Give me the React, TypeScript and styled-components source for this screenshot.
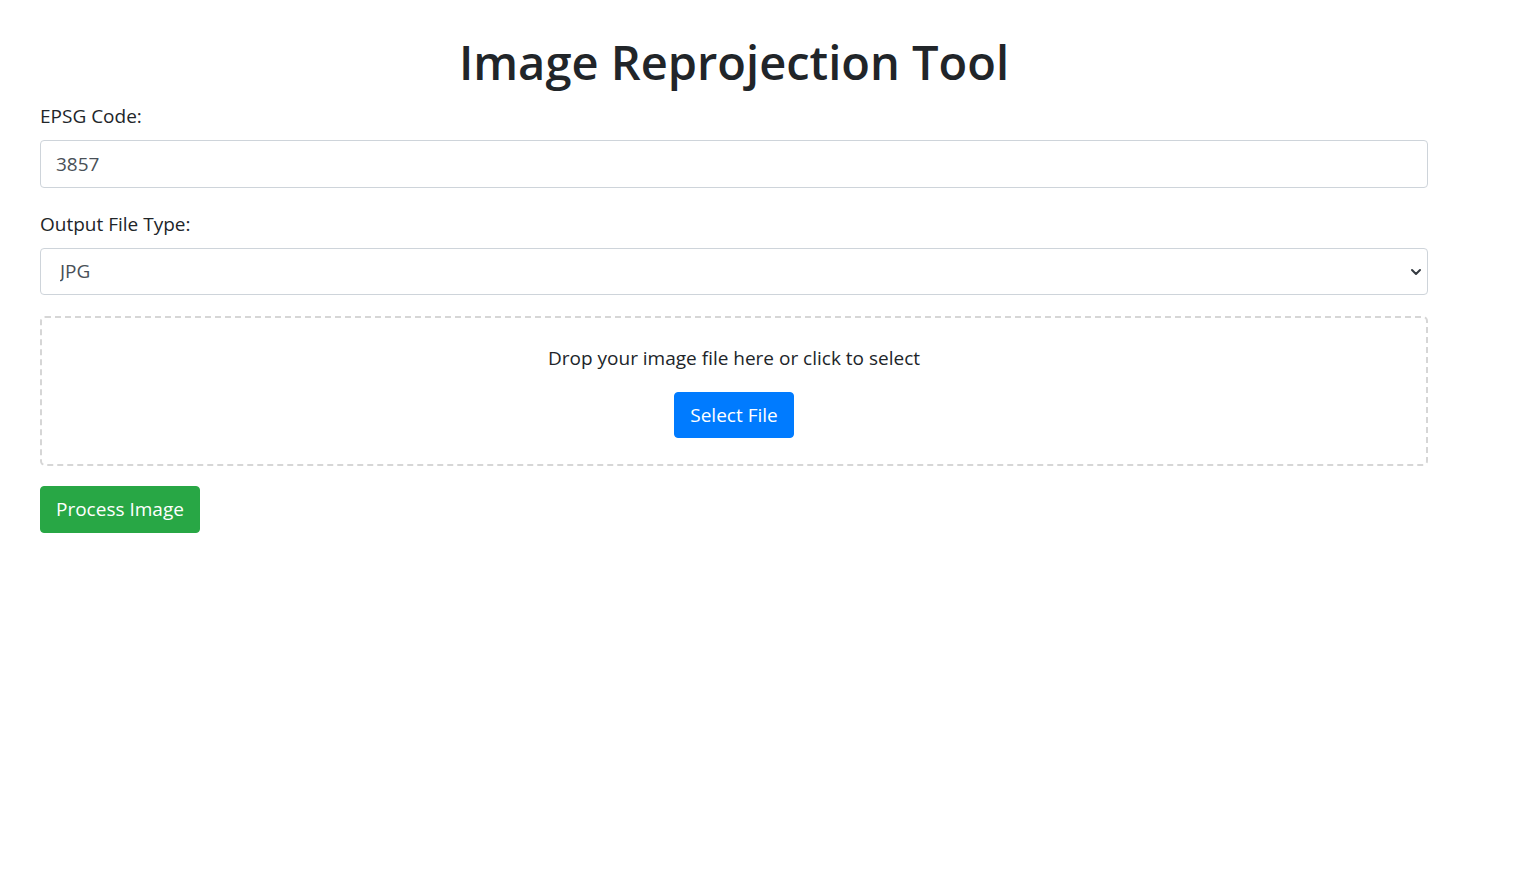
import React from "react";
import styled, { createGlobalStyle } from "styled-components";

const Global = createGlobalStyle`
  html, body { margin: 0; padding: 0; background: #fff; }
  body {
    font-family: "Open Sans", "Noto Sans", sans-serif;
    color: #212529;
    font-size: 19px;
    line-height: 1.5;
  }
  * { box-sizing: border-box; }
`;

const Page = styled.div`
  padding: 0 88px 40px 40px;
`;

const Title = styled.h1`
  margin: 30px 0 7px;
  font-size: 47px;
  line-height: 65px;
  font-weight: 600;
  text-align: center;
  color: #212529;
`;

const Field = styled.div<{ $gap: number }>`
  display: flex;
  flex-direction: column;
  margin-bottom: ${(p) => p.$gap}px;
`;

const Label = styled.label`
  font-size: 19px;
  line-height: 28px;
  margin-bottom: 10px;
`;

const Input = styled.input`
  height: 48px;
  padding: 0 15px;
  font: inherit;
  font-size: 19px;
  color: #495057;
  border: 1px solid #ced4da;
  border-radius: 4px;
  background: #fff;
  outline: none;
`;

const SelectWrap = styled.div`
  position: relative;
  display: flex;
`;

const Select = styled.select`
  flex: 1;
  height: 47px;
  padding: 0 15px 0 19px;
  font: inherit;
  font-size: 19px;
  color: #495057;
  border: 1px solid #ced4da;
  border-radius: 4px;
  background: #fff;
  appearance: none;
  outline: none;
`;

const Chevron = styled.svg`
  position: absolute;
  right: 4px;
  top: 50%;
  transform: translateY(-50%);
  pointer-events: none;
`;

const DropZone = styled.div`
  border: 2px dashed #d6d6d6;
  border-radius: 5px;
  padding: 26px 20px 26px;
  display: flex;
  flex-direction: column;
  align-items: center;
  margin-bottom: 20px;
`;

const DropText = styled.p`
  margin: 0 0 20px;
  font-size: 19px;
  line-height: 28px;
  color: #212529;
`;

const Button = styled.button<{ $variant: "primary" | "success" }>`
  height: ${(p) => (p.$variant === "primary" ? 46 : 47)}px;
  padding: 0 15px;
  font: inherit;
  font-size: 19px;
  color: #fff;
  border: 1px solid ${(p) => (p.$variant === "primary" ? "#007bff" : "#28a745")};
  background: ${(p) => (p.$variant === "primary" ? "#007bff" : "#28a745")};
  border-radius: 4px;
  cursor: pointer;
`;

const Actions = styled.div`
  display: flex;
`;

export default function App() {
  return (
    <>
      <Global />
      <Page>
        <Title>Image Reprojection Tool</Title>
        <Field $gap={22}>
          <Label htmlFor="epsg">EPSG Code:</Label>
          <Input id="epsg" defaultValue="3857" />
        </Field>
        <Field $gap={21}>
          <Label htmlFor="type">Output File Type:</Label>
          <SelectWrap>
            <Select id="type" defaultValue="jpg">
              <option value="jpg">JPG</option>
              <option value="png">PNG</option>
              <option value="tif">TIFF</option>
            </Select>
            <Chevron width="16" height="16" viewBox="0 0 16 16">
              <path d="M4 6l4 4 4-4" fill="none" stroke="#343a40" strokeWidth="2" strokeLinecap="round" strokeLinejoin="round" />
            </Chevron>
          </SelectWrap>
        </Field>
        <DropZone>
          <DropText>Drop your image file here or click to select</DropText>
          <Button $variant="primary">Select File</Button>
        </DropZone>
        <Actions>
          <Button $variant="success">Process Image</Button>
        </Actions>
      </Page>
    </>
  );
}
